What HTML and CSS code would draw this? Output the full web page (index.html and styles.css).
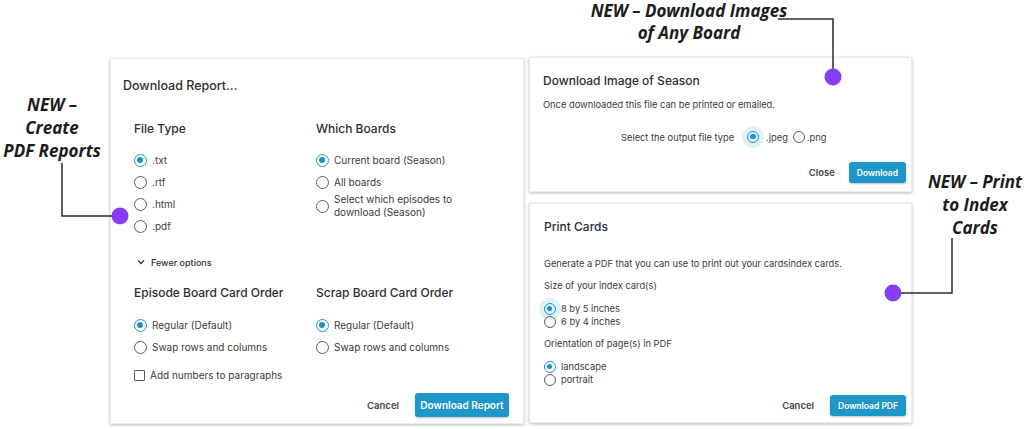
FILE: index.html
```html
<!DOCTYPE html>
<html lang="en">
<head>
    <meta charset="UTF-8">
    <title>Download and print dialogs</title>
    <link rel="stylesheet" href="styles.css">
</head>
<body>
    <div class="stage">
        <div class="dialog report">
            <div class="dialog-title">Download Report...</div>

            <div class="cols first">
                <div class="col">
                    <div class="section-title">File Type</div>
                    <div class="options">
                        <label class="opt"><span class="radio on"></span>.txt</label>
                        <label class="opt"><span class="radio"></span>.rtf</label>
                        <label class="opt"><span class="radio"></span>.html</label>
                        <label class="opt"><span class="radio"></span>.pdf</label>
                    </div>
                </div>
                <div class="col">
                    <div class="section-title">Which Boards</div>
                    <div class="options">
                        <label class="opt"><span class="radio on"></span>Current board (Season)</label>
                        <label class="opt"><span class="radio"></span>All boards</label>
                        <label class="opt two-line"><span class="radio"></span><span>Select which episodes to<br>download (Season)</span></label>
                    </div>
                </div>
            </div>

            <div class="fewer">
                <svg width="8" height="6" viewBox="0 0 8 6"><path d="M1 1.5 L4 4.5 L7 1.5" fill="none" stroke="#333" stroke-width="1.3"/></svg>
                Fewer options
            </div>

            <div class="cols second">
                <div class="col">
                    <div class="section-title">Episode Board Card Order</div>
                    <div class="options">
                        <label class="opt"><span class="radio on"></span>Regular (Default)</label>
                        <label class="opt"><span class="radio"></span>Swap rows and columns</label>
                    </div>
                </div>
                <div class="col">
                    <div class="section-title">Scrap Board Card Order</div>
                    <div class="options">
                        <label class="opt"><span class="radio on"></span>Regular (Default)</label>
                        <label class="opt"><span class="radio"></span>Swap rows and columns</label>
                    </div>
                </div>
            </div>

            <label class="opt check-row"><span class="checkbox"></span>Add numbers to paragraphs</label>

            <div class="footer">
                <button class="btn-text">Cancel</button>
                <button class="btn-primary big">Download Report</button>
            </div>
        </div>

        <div class="right-col">
            <div class="dialog image">
                <div class="dialog-title">Download Image of Season</div>
                <div class="desc">Once downloaded this file can be printed or emailed.</div>
                <div class="file-type">
                    <span class="ft-label">Select the output file type</span>
                    <span class="halo"><span class="radio on"></span></span>
                    <span class="ft-opt">.jpeg</span>
                    <span class="radio"></span>
                    <span class="ft-opt">.png</span>
                </div>
                <div class="footer">
                    <button class="btn-text">Close</button>
                    <button class="btn-primary small">Download</button>
                </div>
            </div>

            <div class="dialog print">
                <div class="dialog-title">Print Cards</div>
                <div class="desc intro">Generate a PDF that you can use to print out your cardsindex cards.</div>
                <div class="desc">Size of your index card(s)</div>
                <div class="tight">
                    <label class="opt"><span class="halo"><span class="radio on"></span></span>8 by 5 inches</label>
                    <label class="opt"><span class="radio"></span>6 by 4 inches</label>
                </div>
                <div class="desc">Orientation of page(s) in PDF</div>
                <div class="tight">
                    <label class="opt"><span class="radio on"></span>landscape</label>
                    <label class="opt"><span class="radio"></span>portrait</label>
                </div>
                <div class="footer">
                    <button class="btn-text">Cancel</button>
                    <button class="btn-primary small">Download PDF</button>
                </div>
            </div>
        </div>

        <!-- callouts -->
        <svg class="callout-lines" width="1024" height="429">
            <polyline points="62,163 62,216 118,216" fill="none" stroke="#2b2b2b" stroke-width="1.5"/>
            <polyline points="778,19 833,19 833,76" fill="none" stroke="#2b2b2b" stroke-width="1.5"/>
            <polyline points="952,238 952,293 895,293" fill="none" stroke="#2b2b2b" stroke-width="1.5"/>
            <circle cx="120" cy="216" r="8.5" fill="#883cf5"/>
            <circle cx="833" cy="77" r="8.5" fill="#883cf5"/>
            <circle cx="893" cy="293" r="8.5" fill="#883cf5"/>
        </svg>
        <div class="callout c-left">NEW –<br>Create<br>PDF Reports</div>
        <div class="callout c-top">NEW – Download Images<br>of Any Board</div>
        <div class="callout c-right">NEW – Print<br>to Index<br>Cards</div>
    </div>
</body>
</html>
```

FILE: styles.css
```css
body {
    margin: 0;
    background: white;
    color: #333;
    font-family: Inter, "Liberation Sans", sans-serif;
}

.stage {
    position: relative;
    width: 1024px;
    height: 429px;
    box-sizing: border-box;
    padding: 57px 0 0 110px;
    display: flex;
    align-items: flex-start;
    gap: 5px;
    overflow: hidden;
}

.dialog {
    background: white;
    border: 1px solid #ececec;
    box-shadow: 0 1px 3px rgba(0, 0, 0, 0.28);
    box-sizing: border-box;
    display: flex;
    flex-direction: column;
}

.dialog-title {
    font-size: 12px;
    line-height: 16px;
    font-weight: 500;
    color: #2e2e2e;
}

/* left dialog */
.report {
    width: 414px;
    height: 366px;
    margin-top: 1px;
    padding: 19px 14px 6px 12px;
}

.report .dialog-title {
    font-size: 12.5px;
}

.cols {
    display: flex;
    padding-left: 11px;
}

.cols.first {
    margin-top: 27px;
}

.col {
    width: 182px;
}

.section-title {
    font-size: 12px;
    line-height: 16px;
    font-weight: 500;
    color: #2e2e2e;
    margin-bottom: 12px;
}

.opt {
    display: flex;
    align-items: center;
    gap: 5px;
    font-size: 10px;
    color: #3a3a3a;
    height: 22px;
}

.opt.two-line {
    height: 26px;
    line-height: 13px;
}

.radio {
    display: inline-block;
    width: 12px;
    height: 12px;
    border: 1.3px solid #5c5c5c;
    border-radius: 50%;
    box-sizing: border-box;
    flex: none;
    position: relative;
}

.radio.on {
    border-color: #1b92c8;
}

.radio.on::after {
    content: "";
    position: absolute;
    left: 2px;
    top: 2px;
    width: 5.4px;
    height: 5.4px;
    border-radius: 50%;
    background: #1b92c8;
}

.report .radio {
    width: 13px;
    height: 13px;
}

.report .radio.on::after {
    width: 6.4px;
    height: 6.4px;
}

.checkbox {
    display: inline-block;
    width: 11px;
    height: 11px;
    border: 1.3px solid #5c5c5c;
    border-radius: 1px;
    box-sizing: border-box;
    flex: none;
}

.fewer {
    display: flex;
    align-items: center;
    gap: 6px;
    padding-left: 14px;
    margin-top: 18px;
    height: 14px;
    font-size: 9px;
    font-weight: 500;
    color: #333;
}

.cols.second {
    margin-top: 16px;
}

.cols.second .section-title {
    margin-bottom: 13px;
}

.check-row {
    margin: 6px 0 0 11px;
}

.footer {
    margin-top: auto;
    display: flex;
    justify-content: flex-end;
    align-items: center;
    gap: 16px;
}

button {
    font-family: inherit;
    border: none;
    cursor: pointer;
}

.btn-text {
    background: none;
    font-size: 9.5px;
    font-weight: 600;
    color: #444;
    padding: 0;
}

.btn-primary {
    background: #1e96c8;
    color: white;
    font-weight: 600;
    border-radius: 3px;
    box-shadow: 0 1px 2px rgba(0, 0, 0, 0.25);
}

.btn-primary.big {
    font-size: 10px;
    height: 24px;
    width: 94px;
    padding: 0;
}

.btn-primary.small {
    font-size: 8.5px;
    height: 21px;
    padding: 0 8px;
}

/* right column */
.right-col {
    width: 383px;
    display: flex;
    flex-direction: column;
    gap: 11px;
}

.image {
    height: 135px;
    padding: 15px 5px 8px 13px;
}

.image .footer {
    gap: 14px;
}

.desc {
    font-size: 9.3px;
    color: #3a3a3a;
    line-height: 14px;
}

.image .desc {
    margin-top: 9px;
}

.file-type {
    display: flex;
    align-items: center;
    font-size: 9.3px;
    color: #3a3a3a;
    margin-top: 14px;
    padding-left: 78px;
    height: 22px;
}

.ft-label {
    margin-right: 8px;
}

.ft-opt {
    margin: 0 5px 0 2px;
}

.halo {
    width: 22px;
    height: 22px;
    border-radius: 50%;
    background: #e1f1f8;
    display: inline-flex;
    align-items: center;
    justify-content: center;
    flex: none;
}

.print {
    height: 220px;
    padding: 15px 5px 6px 14px;
}

.print .desc {
    margin-top: 9px;
}

.print .desc.intro {
    margin-top: 22px;
}

.print .desc.intro + .desc {
    margin-top: 8px;
}

.tight {
    margin-top: 9px;
}

.tight .opt {
    height: 13px;
    font-size: 9.3px;
}

.tight .halo {
    margin: -5px;
}

/* callouts */
.callout-lines {
    position: absolute;
    left: 0;
    top: 0;
    pointer-events: none;
}

.callout {
    position: absolute;
    font-family: "Open Sans", sans-serif;
    font-style: italic;
    font-weight: 700;
    font-size: 17px;
    line-height: 23px;
    color: #1c1c1c;
    text-align: center;
    white-space: nowrap;
}

.c-left {
    left: 0;
    width: 104px;
    top: 93px;
}

.c-top {
    left: 589px;
    width: 200px;
    top: 0;
    line-height: 22px;
}

.c-right {
    left: 925px;
    width: 100px;
    top: 170px;
}
```
